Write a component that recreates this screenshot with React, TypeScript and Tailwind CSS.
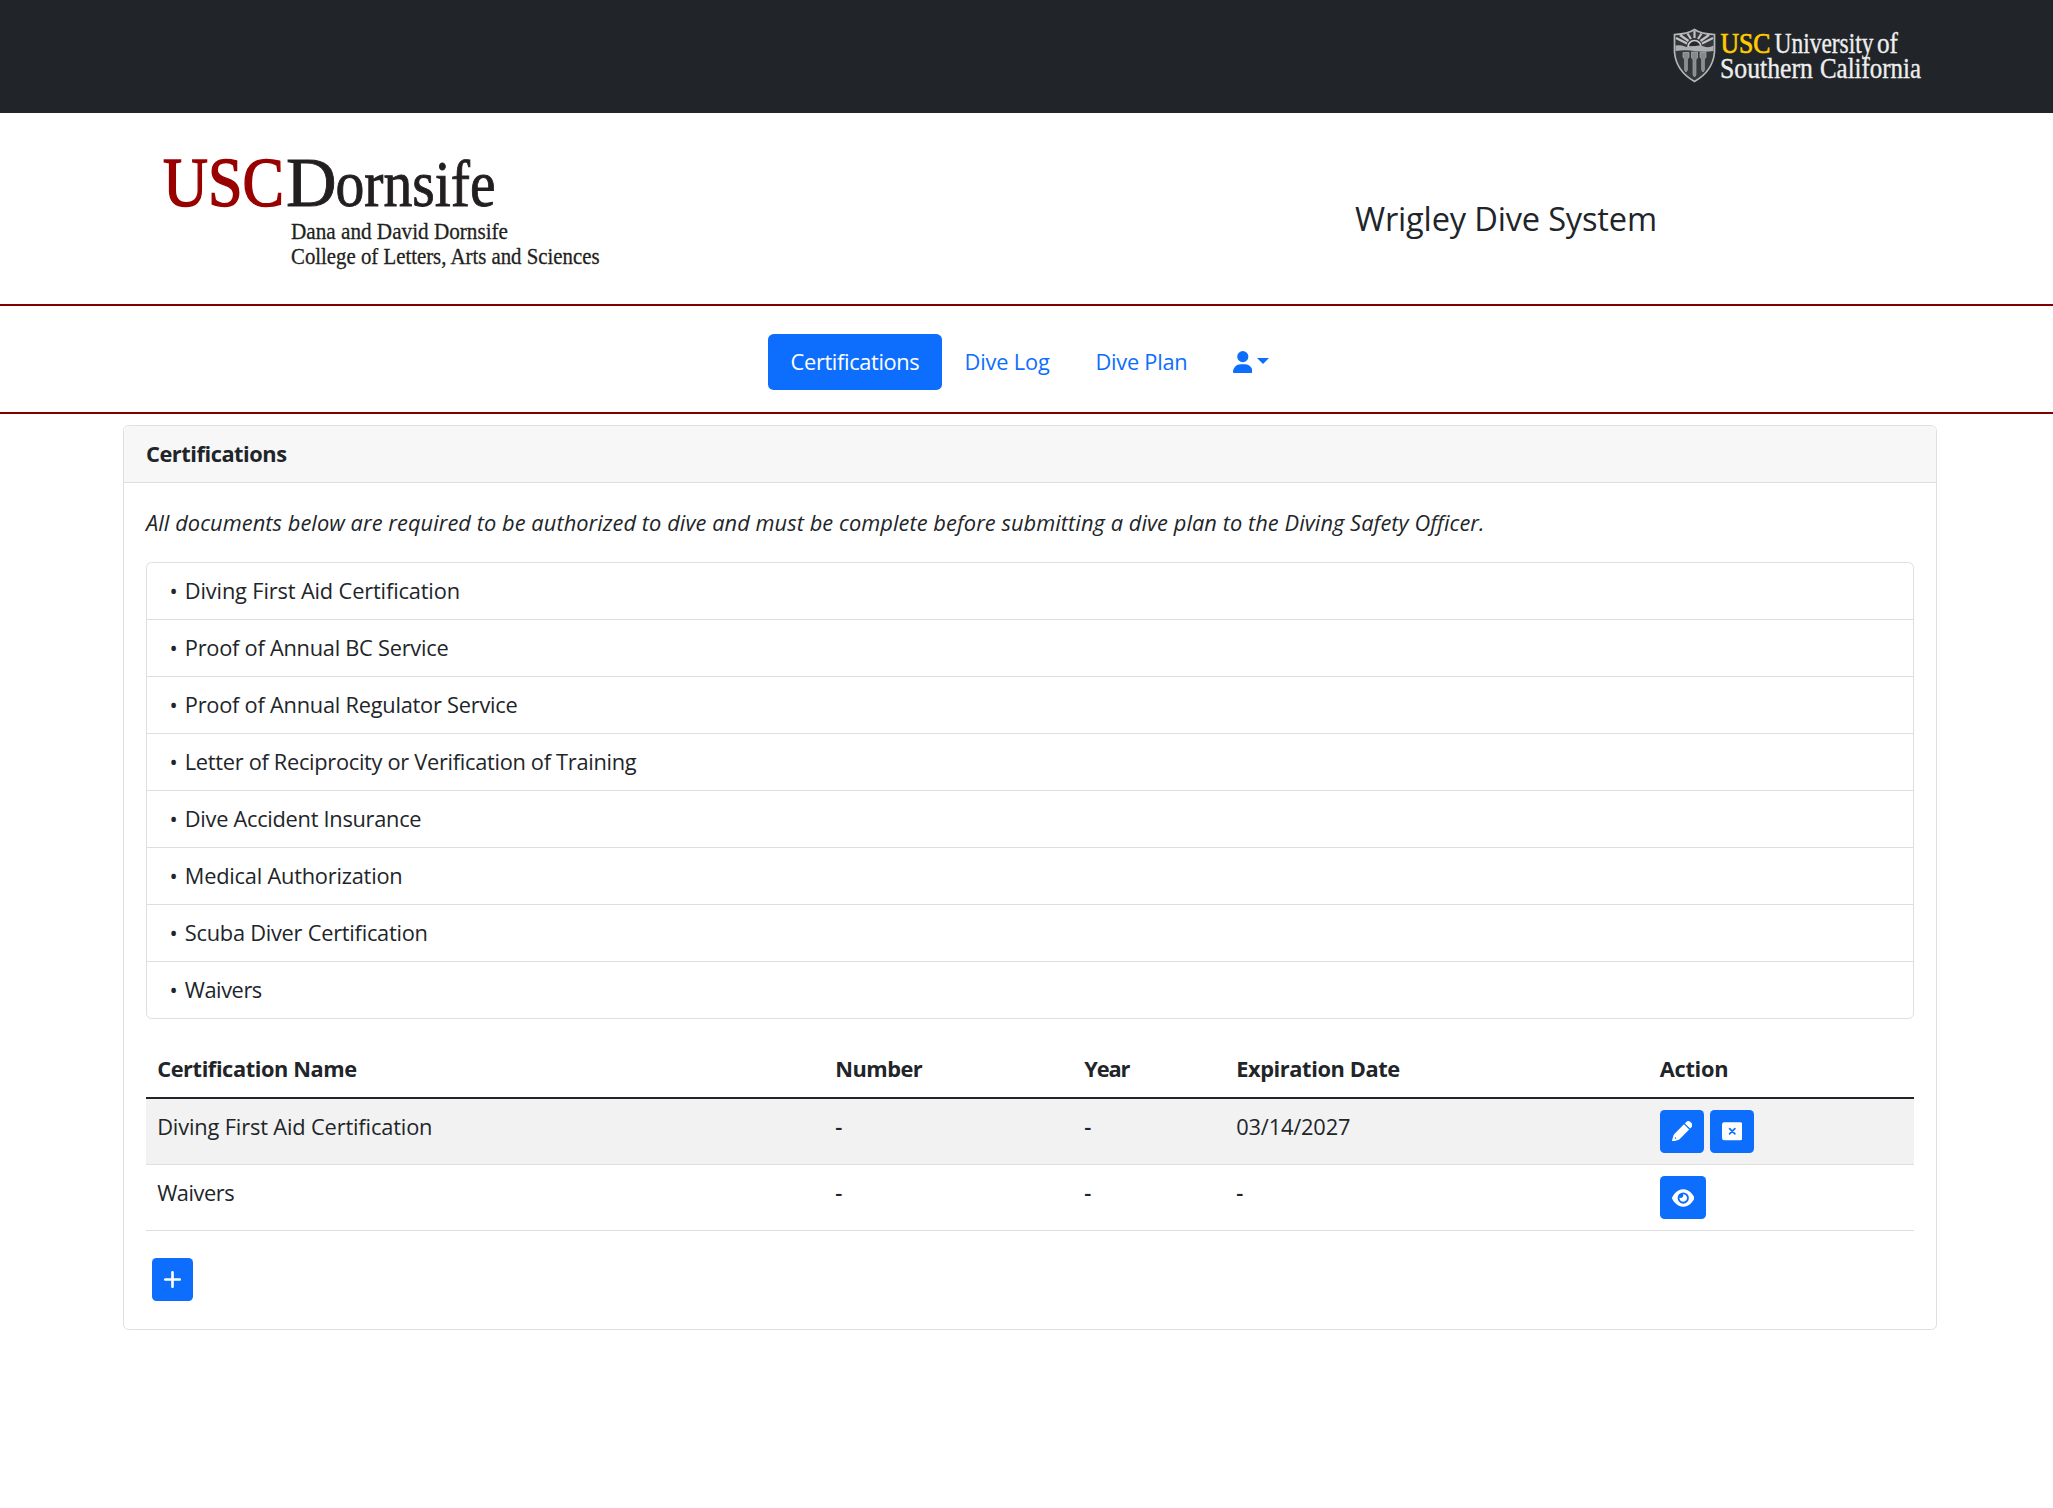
import type { ReactNode } from "react";
import { FaEye, FaPlus, FaUser } from "react-icons/fa6";

const documents = [
  { label: "Diving First Aid Certification", tracking: "tracking-[-0.15px]" },
  { label: "Proof of Annual BC Service", tracking: "tracking-[-0.25px]" },
  { label: "Proof of Annual Regulator Service", tracking: "tracking-[-0.24px]" },
  { label: "Letter of Reciprocity or Verification of Training", tracking: "tracking-[-0.3px]" },
  { label: "Dive Accident Insurance", tracking: "tracking-[-0.28px]" },
  { label: "Medical Authorization", tracking: "tracking-[-0.22px]" },
  { label: "Scuba Diver Certification", tracking: "tracking-[-0.25px]" },
  { label: "Waivers", tracking: "tracking-[-0.45px]" },
];

function UniversityLogo() {
  return (
    <svg width="250" height="76" viewBox="1672 17 250 76" fontFamily="'Liberation Serif', serif" fontSize="28.5">
      {/* Shield */}
      <path d="M1674.500 34.500Q1688 34 1694.500 29.500Q1701 34 1714.500 34.500V52Q1713 71 1694.500 81.500Q1676 71 1674.500 52Z" fill="#34383b" stroke="#b4b7b9" strokeWidth="1.700" />
      <path d="M1694.500 38V31M1691 39L1687.500 33.500M1698 39L1701.500 33.500M1688.500 41L1680 35M1700.500 41L1709 35M1687 43.500L1676 38M1702 43.500L1713 38" stroke="#c0c2c4" strokeWidth="2.200" fill="none" />
      <path d="M1688 47A6.500 6.500 0 0 1 1701 47Z" fill="#25292d" stroke="#c9cbcc" strokeWidth="1.700" />
      <path d="M1675.500 45.500Q1680 44.500 1685 46.500T1694.500 46.500T1704 46.500T1713.500 45.500V51Q1704 52.500 1694.500 51T1675.500 51Z" fill="#adb0b2" />
      <path
        d="M1683 52.500h6v5l-1.700 1.500v11l-1.300 2-1.300-2V59l-1.700-1.500zM1691.500 52h6v6l-1.600 1.500V75l-1.400 2-1.400-2V59.500l-1.600-1.500zM1700 52.500h6v5l-1.700 1.500v11l-1.300 2-1.300-2V59l-1.700-1.500z"
        fill="#85898c" stroke="#a4a7a9" strokeWidth="0.800"
      />
      <text x="1720.500" y="52.500" textLength="50" lengthAdjust="spacingAndGlyphs" fill="#ffcc00" stroke="#ffcc00" strokeWidth="0.700">USC</text>
      <g fill="#eeeeee" stroke="#eeeeee" strokeWidth="0.350">
        <text x="1774.500" y="52.500" textLength="99" lengthAdjust="spacingAndGlyphs">University</text>
        <text x="1877" y="52.500" textLength="21" lengthAdjust="spacingAndGlyphs">of</text>
        <text x="1720" y="78" textLength="93" lengthAdjust="spacingAndGlyphs">Southern</text>
        <text x="1820" y="78" textLength="101" lengthAdjust="spacingAndGlyphs">California</text>
      </g>
    </svg>
  );
}

function DornsifeLogo() {
  return (
    <svg width="450" height="146" viewBox="158 130 450 146" fontFamily="'Liberation Serif', serif" fill="#231f20">
      <text x="163" y="206" fontSize="70" textLength="121" lengthAdjust="spacingAndGlyphs" fill="#990000" stroke="#990000" strokeWidth="1.500">USC</text>
      <text y="206" stroke="#231f20" strokeWidth="0.900">
        <tspan x="286" fontSize="70">D</tspan>
        <tspan x="335.500" fontSize="65" textLength="160" lengthAdjust="spacingAndGlyphs">ornsife</tspan>
      </text>
      <g fontSize="23.500" stroke="#231f20" strokeWidth="0.300">
        <text x="291" y="239" textLength="217" lengthAdjust="spacingAndGlyphs">Dana and David Dornsife</text>
        <text x="291" y="263.500" textLength="308.500" lengthAdjust="spacingAndGlyphs">College of Letters, Arts and Sciences</text>
      </g>
    </svg>
  );
}

function PencilIcon() {
  return (
    <svg viewBox="0 0 512 512" className="h-[20.5px] w-[20.5px]" fill="currentColor" fillRule="evenodd">
      <path d="M362.700 19.300L322 60 452 190l40.700-40.700c25-25 25-65.500 0-90.500L453.300 19.300c-25-25-65.500-25-90.500 0z" />
      <path d="M299 83L58.600 323.500c-10.400 10.400-18 23.300-22.200 37.400L1 481.200C-1.500 489.700.8 498.800 7 505s15.300 8.500 23.700 6.100l120.300-35.400c14.100-4.200 27-11.800 37.400-22.200L429 213zM88 408a17 17 0 1 0 .1 0z" />
    </svg>
  );
}

function DeleteIcon() {
  return (
    <svg viewBox="0 0 512 512" className="h-[20.5px] w-[20.5px]">
      <rect y="32" width="512" height="448" rx="56" fill="currentColor" />
      <path d="M190 190L322 322M322 190L190 322" stroke="#0d6efd" strokeWidth="42" strokeLinecap="round" />
    </svg>
  );
}

function IconButton({ label, size, children }: { label: string; size: string; children: ReactNode }) {
  return (
    <button aria-label={label} className={`flex h-[43px] items-center justify-center rounded-[4.5px] bg-[#0d6efd] text-white ${size}`}>
      {children}
    </button>
  );
}

function Dash() {
  return <td className="font-semibold">-</td>;
}

export default function App() {
  return (
    <div className="min-h-screen bg-white font-['Open_Sans','Noto_Sans',sans-serif] text-[21.8px] leading-[33.6px] text-[#212529]">
      <header className="flex h-[113px] justify-end bg-[#212529] pt-[17px] pr-[131px]">
        <UniversityLogo />
      </header>

      <div className="flex h-[193px] items-start border-b-2 border-[#800000] pt-[17px] pl-[158px]">
        <DornsifeLogo />
        <h1 className="mt-[69px] ml-[747px] text-[32.6px] leading-[40px] tracking-[-0.18px]">Wrigley Dive System</h1>
      </div>

      <nav className="flex h-[108px] items-start border-b-2 border-[#800000] pt-[28px] pl-[768px]">
        <a className="flex h-14 w-[174px] items-center justify-center rounded-[5.6px] bg-[#0d6efd] tracking-[-0.35px] text-white">Certifications</a>
        <a className="ml-[22.500px] flex h-14 w-[131px] items-center tracking-[-0.15px] text-[#0d6efd]">Dive Log</a>
        <a className="flex h-14 w-[137px] items-center tracking-[-0.25px] text-[#0d6efd]">Dive Plan</a>
        <a className="flex h-14 items-center text-[#0d6efd]">
          <FaUser className="h-[22.4px] w-[19.6px]" />
          <span className="mb-[3px] ml-[5px] border-x-[6px] border-t-[6px] border-x-transparent border-t-[#0d6efd]" />
        </a>
      </nav>

      <main className="mt-[11px] ml-[123px] h-[905px] w-[1814px] rounded-[5.6px] border border-[#dfdfdf]">
        <h2 className="h-[57px] rounded-t-[4.6px] border-b border-[#dfdfdf] bg-[#f7f7f7] px-[22px] pt-[11px] font-bold tracking-[-0.46px]">Certifications</h2>
        <div className="px-[22px] pt-[23px]">
          <p className="italic tracking-[0.065px]">
            All documents below are required to be authorized to dive and must be complete before submitting a dive plan to the Diving Safety Officer.
          </p>
          <ul className="mt-[22.4px] divide-y divide-[#dfdfdf] rounded-[5.6px] border border-[#dfdfdf]">
            {documents.map((doc) => (
              <li key={doc.label} className={`flex h-[57px] items-center pl-[22.4px] last:h-[56px] ${doc.tracking}`}>
                <span className="w-[15.4px] tracking-normal">•</span>
                {doc.label}
              </li>
            ))}
          </ul>

          <table className="mt-[22.4px] w-[1768px] table-fixed border-collapse text-left">
            <colgroup>
              <col className="w-[678px]" />
              <col className="w-[249px]" />
              <col className="w-[152px]" />
              <col className="w-[423.6px]" />
              <col />
            </colgroup>
            <thead>
              <tr className="h-[57px] border-b-2 border-[#212529] align-top [&>th]:px-[11.2px] [&>th]:pt-[10.2px] [&>th]:font-bold">
                <th className="tracking-[-0.42px]">Certification Name</th>
                <th className="tracking-[-0.5px]">Number</th>
                <th className="tracking-[-1.1px]">Year</th>
                <th className="tracking-[-0.4px]">Expiration Date</th>
                <th className="tracking-[-0.3px]">Action</th>
              </tr>
            </thead>
            <tbody className="[&_td]:px-[11.2px] [&_tr]:h-[66px] [&_tr]:border-b [&_tr]:border-[#dfdfdf] [&_tr]:align-top">
              <tr className="bg-[#f2f2f2] [&>td]:pt-[10.2px]">
                <td className="tracking-[-0.15px]">Diving First Aid Certification</td>
                <Dash />
                <Dash />
                <td className="tracking-[-0.16px]">03/14/2027</td>
                <td>
                  <div className="flex gap-[6px]">
                    <IconButton label="Edit" size="w-[44px]"><PencilIcon /></IconButton>
                    <IconButton label="Delete" size="w-[44px]"><DeleteIcon /></IconButton>
                  </div>
                </td>
              </tr>
              <tr className="[&>td]:pt-[11.2px]">
                <td className="tracking-[-0.45px]">Waivers</td>
                <Dash />
                <Dash />
                <Dash />
                <td>
                  <IconButton label="View" size="w-[46px]"><FaEye className="h-[20px] w-[22.5px]" /></IconButton>
                </td>
              </tr>
            </tbody>
          </table>

          <div className="mt-[27.5px] ml-[6px]">
            <IconButton label="Add" size="w-[41px]"><FaPlus className="h-[21px] w-[19px]" /></IconButton>
          </div>
        </div>
      </main>
    </div>
  );
}
